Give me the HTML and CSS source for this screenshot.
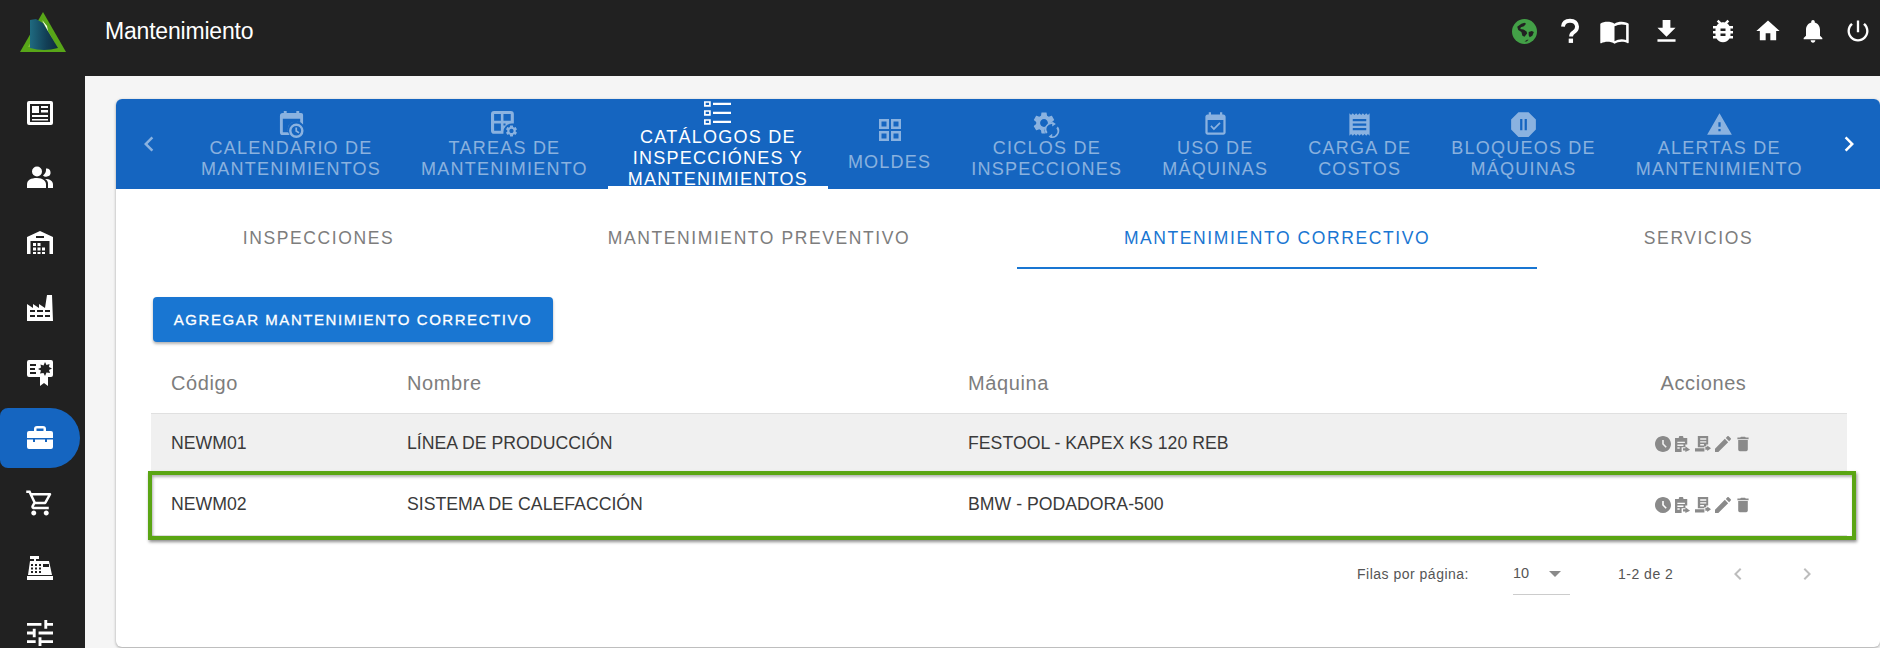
FILE: index.html
```html
<!DOCTYPE html>
<html lang="es">
<head>
<meta charset="utf-8">
<title>Mantenimiento</title>
<link rel="stylesheet" href="styles.css">
</head>
<body>
<div class="app">
  <header class="topbar">
    <div class="logo">
      <svg width="46" height="42" viewBox="0 0 46 42">
        <defs><linearGradient id="lg" x1="0" x2="1" y1="0" y2="0"><stop offset="0" stop-color="#1f6a80"/><stop offset=".6" stop-color="#123e55"/><stop offset="1" stop-color="#0d2c3d"/></linearGradient></defs>
        <path d="M23 0 46 40H0Z" fill="#58a618"/>
        <path d="M23 9 37 35H8Z" fill="#7ec03a"/>
        <path d="M10 8 16 7 23 11 38 36Q24 40 10 36Z" fill="url(#lg)"/>
        <path d="M22 8 27 14 28 19Z" fill="#fff"/>
      </svg>
    </div>
    <h1 class="title">Mantenimiento</h1>
    <nav class="tools">
      <span class="tool"><svg class="i-globe" viewBox="0 0 24 24"><circle cx="12" cy="12" r="12" fill="#43a047"/><path d="M5 7.500 9 4.500l3-1 1.500 1-2 2.500-3 1-.5 1.500 3 .5 3 2 .5 2-2.500 3-2-1-1-3.500-3-2zM16 12.500l3-1 2 1-1.500 3.500-2.500 1.500-1-2zM14.500 20h1.500l-2 1.500h-2z" fill="#212121"/></svg></span>
      <span class="tool tool-help"><svg viewBox="0 0 24 24"><path d="M5.500 8Q6 2.500 12 2.500T18.500 8Q18.500 11 15.500 13 13 14.500 13 17" fill="none" stroke="#fff" stroke-width="3.600"/><rect x="10.800" y="19" width="4" height="4" fill="#fff"/></svg></span>
      <span class="tool tool-book"><svg viewBox="0 0 24 24"><path d="M21 5c-1.110-.35-2.330-.5-3.500-.5-1.950 0-4.050.4-5.500 1.500-1.450-1.100-3.550-1.500-5.500-1.500S2.450 4.900 1 6v14.650c0 .25.25.5.5.5.1 0 .15-.05.25-.05C3.100 20.450 5.050 20 6.500 20c1.950 0 4.050.4 5.500 1.500 1.350-.85 3.800-1.500 5.500-1.500 1.650 0 3.350.3 4.750 1.050.1.05.15.05.25.05.25 0 .5-.25.5-.5V6c-.6-.45-1.250-.75-2-1zm0 13.500c-1.100-.35-2.300-.5-3.500-.5-1.700 0-4.150.65-5.500 1.500V8c1.350-.85 3.800-1.500 5.500-1.500 1.200 0 2.400.15 3.500.5v11.500z" fill="#fff"/></svg></span>
      <span class="tool tool-dl"><svg viewBox="0 0 24 24"><path d="M19 9h-4V3H9v6H5l7 7 7-7zM5 18v2h14v-2H5z" fill="#fff"/></svg></span>
      <span class="tool tool-bug"><svg viewBox="0 0 24 24"><path d="M20 8h-2.810c-.45-.78-1.070-1.450-1.820-1.960L17 4.410 15.590 3l-2.170 2.170C12.960 5.060 12.490 5 12 5c-.49 0-.96.06-1.410.17L8.410 3 7 4.410l1.620 1.630C7.880 6.550 7.260 7.220 6.810 8H4v2h2.090c-.05.33-.09.66-.09 1v1H4v2h2v1c0 .34.04.67.09 1H4v2h2.810c1.040 1.790 2.970 3 5.190 3s4.150-1.210 5.190-3H20v-2h-2.090c.05-.33.09-.66.09-1v-1h2v-2h-2v-1c0-.34-.04-.67-.09-1H20V8zm-6 8h-4v-2h4v2zm0-4h-4v-2h4v2z" fill="#fff"/></svg></span>
      <span class="tool"><svg viewBox="0 0 24 24"><path d="M10 20v-6h4v6h5v-8h3L12 3 2 12h3v8z" fill="#fff"/></svg></span>
      <span class="tool"><svg viewBox="0 0 24 24"><path d="M12 22c1.100 0 2-.9 2-2h-4c0 1.100.89 2 2 2zm6-6v-5c0-3.070-1.640-5.640-4.500-6.320V4c0-.83-.67-1.500-1.500-1.500s-1.500.67-1.500 1.500v.68C7.630 5.360 6 7.920 6 11v5l-2 2v1h16v-1l-2-2z" fill="#fff"/></svg></span>
      <span class="tool"><svg viewBox="0 0 24 24"><path d="M13 3h-2v10h2V3zm4.830 2.170l-1.420 1.420C17.990 7.860 19 9.810 19 12c0 3.870-3.130 7-7 7s-7-3.130-7-7c0-2.190 1.010-4.140 2.580-5.420L6.170 5.170C4.230 6.820 3 9.260 3 12c0 4.970 4.030 9 9 9s9-4.030 9-9c0-2.740-1.230-5.180-3.170-6.830z" fill="#fff"/></svg></span>
    </nav>
  </header>

  <aside class="sidebar">
    <a class="side-item"><svg viewBox="0 0 26 24"><path fill="#fff" fill-rule="evenodd" d="M2 0H24a2 2 0 0 1 2 2V22a2 2 0 0 1-2 2H2a2 2 0 0 1-2-2V2a2 2 0 0 1 2-2ZM3 3V21H23V3Z"/><path fill="#fff" d="M5 5h7v7H5zM14 5h7v2h-7zM14 9h7v2.500h-7zM5 14h16v2H5zM5 18h16v1.500H5z"/></svg></a>
    <a class="side-item"><svg viewBox="0 0 26 24"><path fill="#fff" d="M10 10.500a5 5 0 1 0 0-10 5 5 0 0 0 0 10ZM20 10.500a4 4 0 1 0-1-8 8 8 0 0 1-3 7 4 4 0 0 0 4 1ZM0 22v-3.500C0 14 4 12 10 12s9 3 9 6.500V22ZM21 22v-4c0-2.500-1-4-3-5 5 0 8 2 8 5.500V22Z"/></svg></a>
    <a class="side-item"><svg viewBox="0 0 26 24"><path fill="#fff" fill-rule="evenodd" d="M13 0 26 6V23H22.500V10H3.500V23H0V6ZM9 5V7H17V5Z"/><path fill="#fff" d="M6 12h3v3H6zM10.500 12h3v3h-3zM6 16.500h3v3H6zM10.500 16.500h3v3h-3zM15 16.500h3v3h-3zM6 21h3v2H6zM10.500 21h3v2h-3zM15 21h3v2h-3z"/></svg></a>
    <a class="side-item"><svg viewBox="0 0 26 26"><path fill="#fff" fill-rule="evenodd" d="M0 9 6 13V9L12 13V9L18 13 20 0H25L26 26H0ZM3 15V17H8V15ZM10 15V17H16V15ZM18 15V17H23V15ZM3 20V22H8V20ZM10 20V22H16V20ZM18 20V22H23V20Z"/></svg></a>
    <a class="side-item"><svg viewBox="0 0 26 26"><path fill="#fff" fill-rule="evenodd" d="M2 0H24a2 2 0 0 1 2 2V15a2 2 0 0 1-2 2H21V26L17 23 13 26V17H2a2 2 0 0 1-2-2V2a2 2 0 0 1 2-2ZM3 4V6H9V4ZM3 8V10H8V8ZM3 12V14H9V12Z"/><path fill="#212121" d="M18 2l1.500 3 3-1-.5 3 3 1.500-3 1.500 1 3-3.500-.5L18 16l-1.500-3-3.500.5 1-3-3-1.500 3-1.500-.5-3 3 1Z"/></svg></a>
    <a class="side-item is-active"><svg viewBox="0 0 26 24"><path fill="#fff" fill-rule="evenodd" d="M7 5V3a3 3 0 0 1 3-3h6a3 3 0 0 1 3 3V5H24a2 2 0 0 1 2 2V12H0V7a2 2 0 0 1 2-2ZM9.500 5H16.500V2.500H9.500Z"/><path fill="#fff" d="M0 13.500H6V16H8V13.500H18V16H20V13.500H26V21a2 2 0 0 1-2 2H2a2 2 0 0 1-2-2Z"/></svg></a>
    <a class="side-item"><svg class="i-cart" viewBox="0 0 24 24"><path fill="#fff" d="M15.550 13c.75 0 1.410-.41 1.750-1.030l3.580-6.490c.37-.66-.11-1.480-.87-1.480H5.210l-.94-2H1v2h2l3.600 7.590-1.350 2.440C4.520 15.370 5.480 17 7 17h12v-2H7l1.100-2h7.450zM6.160 6h12.150l-2.760 5H8.530L6.160 6zM7 18c-1.100 0-1.990.9-1.990 2S5.900 22 7 22s2-.9 2-2-.9-2-2-2zm10 0c-1.100 0-1.990.9-1.990 2s.89 2 1.990 2 2-.9 2-2-.9-2-2-2z"/></svg></a>
    <a class="side-item"><svg viewBox="0 0 26 24"><path fill="#fff" fill-rule="evenodd" d="M3 0H12V3H9V5H22L25 19H1L3 5H7V3H3ZM4 8V10H6V8ZM8 8V10H10V8ZM12 8V10H14V8ZM4 11.500V13.500H6V11.500ZM8 11.500V13.500H10V11.500ZM12 11.500V13.500H14V11.500ZM4 15V17H6V15ZM8 15V17H10V15ZM12 15V17H14V15ZM16 8V11H22V8Z"/><path fill="#fff" d="M0 20H26V24H0Z"/></svg></a>
    <a class="side-item"><svg viewBox="3 3 18 18"><path fill="#fff" d="M3 17v2h6v-2H3zM3 5v2h10V5H3zm10 16v-2h8v-2h-8v-2h-2v6h2zM7 9v2H3v2h4v2h2V9H7zm14 4v-2H11v2h10zm-6-4h2V7h4V5h-4V3h-2v6z"/></svg></a>
  </aside>

  <main class="content">
    <section class="card">
      <div class="main-tabs">
        <span class="scroll-btn scroll-prev"><svg viewBox="0 0 24 24"><path d="M15.410 7.410L14 6l-6 6 6 6 1.410-1.410L10.830 12z"/></svg></span>
        <a class="main-tab">
          <svg viewBox="0 0 26 28"><path fill-rule="evenodd" d="M5 0H8V2H18V0H21V2H23a2 2 0 0 1 2 2V14A8 8 0 0 0 11 25H4a3 3 0 0 1-3-3V5a3 3 0 0 1 3-3H5ZM4 8V22H9.500A9 9 0 0 1 22 11.500V8Z"/><path fill-rule="evenodd" d="M18 13a7.500 7.500 0 1 1 0 15 7.500 7.500 0 0 1 0-15Zm0 2.500a5 5 0 1 0 0 10 5 5 0 0 0 0-10ZM17 17h1.800v3.300l2.500 1.700-1 1.300L17 21.200Z"/></svg>
          <span>CALENDARIO DE<br>MANTENIMIENTOS</span>
        </a>
        <a class="main-tab">
          <svg viewBox="0 0 26 26"><path fill-rule="evenodd" d="M3 0H19a3 3 0 0 1 3 3V12H20A8 8 0 0 0 12 20V22H3a3 3 0 0 1-3-3V3a3 3 0 0 1 3-3ZM3 3V9.500H9.500V3ZM12 3V9.500H19V3ZM3 12V19H9.500V12ZM12 12V14H14V12Z"/><path transform="translate(13 12.500) scale(.56)" d="M19.140 12.940c.04-.3.06-.61.06-.94 0-.32-.02-.64-.07-.94l2.030-1.580c.18-.14.23-.41.12-.61l-1.920-3.320c-.12-.22-.37-.29-.59-.22l-2.390.96c-.5-.38-1.030-.7-1.620-.94l-.36-2.540c-.04-.24-.24-.41-.48-.41h-3.840c-.24 0-.43.17-.47.41l-.36 2.540c-.59.24-1.130.57-1.620.94l-2.390-.96c-.22-.08-.47 0-.59.22L2.740 8.870c-.12.21-.08.47.12.61l2.030 1.580c-.05.3-.09.63-.09.94s.02.64.07.94l-2.030 1.580c-.18.14-.23.41-.12.61l1.920 3.320c.12.22.37.29.59.22l2.390-.96c.5.38 1.030.7 1.620.94l.36 2.540c.05.24.24.41.48.41h3.840c.24 0 .44-.17.47-.41l.36-2.540c.59-.24 1.130-.56 1.620-.94l2.390.96c.22.08.47 0 .59-.22l1.920-3.320c.12-.22.07-.47-.12-.61l-2.010-1.580zM12 15.600c-1.980 0-3.600-1.620-3.600-3.600s1.620-3.600 3.600-3.600 3.600 1.620 3.600 3.600-1.620 3.600-3.600 3.600z"/></svg>
          <span>TAREAS DE<br>MANTENIMIENTO</span>
        </a>
        <a class="main-tab is-active">
          <svg viewBox="0 0 24 22"><path fill-rule="evenodd" d="M0 0H6V5H0ZM1.500 1.500V3.500H4.500V1.500ZM0 8H6V13H0ZM1.500 9.500V11.500H4.500V9.500ZM0 16H6V21H0ZM1.500 17.500V19.500H4.500V17.500Z"/><path d="M8 1.500H24V3.500H8ZM8 9.500H24V11.500H8ZM8 17.500H24V19.500H8Z"/></svg>
          <span>CATÁLOGOS DE<br>INSPECCIÓNES Y<br>MANTENIMIENTOS</span>
        </a>
        <a class="main-tab tab-plain">
          <svg viewBox="0 0 24 24"><path fill-rule="evenodd" d="M1 1H11V11H1ZM3.500 3.500V8.500H8.500V3.500ZM13 1H23V11H13ZM15.500 3.500V8.500H20.500V3.500ZM1 13H11V23H1ZM3.500 15.500V20.500H8.500V15.500ZM13 13H23V23H13ZM15.500 15.500V20.500H20.500V15.500Z"/></svg>
          <span>MOLDES</span>
        </a>
        <a class="main-tab">
          <svg viewBox="0 0 26 26"><path transform="translate(-2 -1) scale(1.050)" d="M19.140 12.940c.04-.3.06-.61.06-.94 0-.32-.02-.64-.07-.94l2.030-1.580c.18-.14.23-.41.12-.61l-1.920-3.320c-.12-.22-.37-.29-.59-.22l-2.390.96c-.5-.38-1.030-.7-1.620-.94l-.36-2.540c-.04-.24-.24-.41-.48-.41h-3.840c-.24 0-.43.17-.47.41l-.36 2.540c-.59.24-1.130.57-1.620.94l-2.390-.96c-.22-.08-.47 0-.59.22L2.740 8.870c-.12.21-.08.47.12.61l2.030 1.580c-.05.3-.09.63-.09.94s.02.64.07.94l-2.030 1.580c-.18.14-.23.41-.12.61l1.920 3.320c.12.22.37.29.59.22l2.390-.96c.5.38 1.030.7 1.620.94l.36 2.540c.05.24.24.41.48.41h3.840c.24 0 .44-.17.47-.41l.36-2.540c.59-.24 1.130-.56 1.620-.94l2.390.96c.22.08.47 0 .59-.22l1.920-3.320c.12-.22.07-.47-.12-.61l-2.010-1.580zM12 15.600c-1.980 0-3.600-1.620-3.600-3.600s1.620-3.600 3.600-3.600 3.600 1.620 3.600 3.600-1.620 3.600-3.600 3.600z"/><circle cx="18.500" cy="18.500" r="7.500" fill="#1565c0"/><path d="M18.500 12.500V15L22 12.500 18.500 10V11a7 7 0 0 0-6 11l1.500-1.500a5 5 0 0 1 4.500-8ZM24 15l-1.500 1.500a5 5 0 0 1-4 8V22L15 24.500 18.500 27V26a7 7 0 0 0 5.500-11Z"/></svg>
          <span>CICLOS DE<br>INSPECCIONES</span>
        </a>
        <a class="main-tab">
          <svg viewBox="0 0 24 24"><path d="M16.530 11.060L15.470 10l-4.880 4.880-2.120-2.120-1.060 1.060L10.590 17l5.940-5.940zM19 3h-1V1h-2v2H8V1H6v2H5c-1.110 0-1.990.9-1.990 2L3 19c0 1.100.89 2 2 2h14c1.100 0 2-.9 2-2V5c0-1.100-.9-2-2-2zm0 16H5V8h14v11z"/></svg>
          <span>USO DE<br>MÁQUINAS</span>
        </a>
        <a class="main-tab">
          <svg viewBox="0 0 24 24"><path d="M18 17H6v-2h12v2zm0-4H6v-2h12v2zm0-4H6V7h12v2zM3 22l1.500-1.500L6 22l1.500-1.500L9 22l1.500-1.500L12 22l1.500-1.500L15 22l1.500-1.500L18 22l1.500-1.500L21 22V2l-1.500 1.500L18 2l-1.500 1.500L15 2l-1.500 1.500L12 2l-1.500 1.500L9 2 7.500 3.500 6 2 4.500 3.500 3 2v20z"/></svg>
          <span>CARGA DE<br>COSTOS</span>
        </a>
        <a class="main-tab">
          <svg viewBox="0 0 24 24"><path fill-rule="evenodd" d="M7.500 1H16.500L23 7.500V16.500L16.500 23H7.500L1 16.500V7.500ZM9 7V17H11V7ZM13 7V17H15V7Z"/></svg>
          <span>BLOQUEOS DE<br>MÁQUINAS</span>
        </a>
        <a class="main-tab">
          <svg viewBox="0 0 24 24"><path d="M1 21h22L12 2 1 21zm12-3h-2v-2h2v2zm0-4h-2v-4h2v4z"/></svg>
          <span>ALERTAS DE<br>MANTENIMIENTO</span>
        </a>
        <span class="scroll-btn scroll-next"><svg viewBox="0 0 24 24"><path d="M10 6L8.590 7.410 13.170 12l-4.580 4.590L10 18l6-6z"/></svg></span>
      </div>

      <div class="sub-tabs">
        <a class="sub-tab">INSPECCIONES</a>
        <a class="sub-tab">MANTENIMIENTO PREVENTIVO</a>
        <a class="sub-tab is-active">MANTENIMIENTO CORRECTIVO</a>
        <a class="sub-tab">SERVICIOS</a>
      </div>

      <button class="add-btn">AGREGAR MANTENIMIENTO CORRECTIVO</button>

      <table class="grid">
        <thead>
          <tr><th class="c-code">Código</th><th class="c-name">Nombre</th><th class="c-machine">Máquina</th><th class="c-actions">Acciones</th></tr>
        </thead>
        <tbody>
          <tr class="is-shaded">
            <td>NEWM01</td><td>LÍNEA DE PRODUCCIÓN</td><td>FESTOOL - KAPEX KS 120 REB</td>
            <td class="c-actions"><div class="actions">
              <svg viewBox="2 2 20 20"><path d="M11.990 2C6.470 2 2 6.480 2 12s4.470 10 9.990 10C17.520 22 22 17.520 22 12S17.520 2 11.990 2zm3.300 14.710L11 12.410V7h2v4.590l3.710 3.710-1.420 1.410z"/></svg>
              <svg viewBox="0 0 17 17"><path fill-rule="evenodd" d="M0 2H4a2.500 2.500 0 0 1 5 0H13V9H11V12H7V17H0ZM2.500 6V7.500H10.500V6ZM2.500 9V10.500H9V9ZM2.500 12V13.500H5V12Z"/><path d="M8.500 13H11V11L16 14.500 11 17V15.500H8.500Z"/></svg>
              <svg viewBox="0 0 17 17"><path fill-rule="evenodd" d="M3 0H14V9H12V11H10V12H3ZM5.500 2.500V4H12V2.500ZM5.500 5.500V7H12V5.500ZM5.500 8.500V10H9.500V8.500Z"/><path d="M0 13H10V16.500H0ZM11 11.500H13V10L17 13 13 16V14.500H11Z"/></svg>
              <svg viewBox="3 3 18 18"><path d="M3 17.250V21h3.750L17.810 9.940l-3.750-3.750L3 17.250zM20.710 7.040c.39-.39.39-1.020 0-1.410l-2.340-2.340c-.39-.39-1.020-.39-1.410 0l-1.830 1.830 3.750 3.750 1.830-1.830z"/></svg>
              <svg viewBox="2 2 20 20"><path d="M6 19c0 1.100.9 2 2 2h8c1.100 0 2-.9 2-2V7H6v12zM19 4h-3.500l-1-1h-5l-1 1H5v2h14V4z"/></svg>
            </div></td>
          </tr>
          <tr>
            <td>NEWM02</td><td>SISTEMA DE CALEFACCIÓN</td><td>BMW - PODADORA-500</td>
            <td class="c-actions"><div class="actions">
              <svg viewBox="2 2 20 20"><path d="M11.990 2C6.470 2 2 6.480 2 12s4.470 10 9.990 10C17.520 22 22 17.520 22 12S17.520 2 11.990 2zm3.300 14.710L11 12.410V7h2v4.590l3.710 3.710-1.420 1.410z"/></svg>
              <svg viewBox="0 0 17 17"><path fill-rule="evenodd" d="M0 2H4a2.500 2.500 0 0 1 5 0H13V9H11V12H7V17H0ZM2.500 6V7.500H10.500V6ZM2.500 9V10.500H9V9ZM2.500 12V13.500H5V12Z"/><path d="M8.500 13H11V11L16 14.500 11 17V15.500H8.500Z"/></svg>
              <svg viewBox="0 0 17 17"><path fill-rule="evenodd" d="M3 0H14V9H12V11H10V12H3ZM5.500 2.500V4H12V2.500ZM5.500 5.500V7H12V5.500ZM5.500 8.500V10H9.500V8.500Z"/><path d="M0 13H10V16.500H0ZM11 11.500H13V10L17 13 13 16V14.500H11Z"/></svg>
              <svg viewBox="3 3 18 18"><path d="M3 17.250V21h3.750L17.810 9.940l-3.750-3.750L3 17.250zM20.710 7.040c.39-.39.39-1.020 0-1.410l-2.340-2.340c-.39-.39-1.020-.39-1.410 0l-1.830 1.830 3.750 3.750 1.830-1.830z"/></svg>
              <svg viewBox="2 2 20 20"><path d="M6 19c0 1.100.9 2 2 2h8c1.100 0 2-.9 2-2V7H6v12zM19 4h-3.500l-1-1h-5l-1 1H5v2h14V4z"/></svg>
            </div></td>
          </tr>
        </tbody>
      </table>

      <div class="highlight"></div>

      <div class="pager">
        <span class="pager-label">Filas por página:</span>
        <span class="pager-select">10<i class="caret"></i></span>
        <span class="pager-range">1-2 de 2</span>
        <span class="pager-btn"><svg viewBox="0 0 24 24"><path d="M15.410 7.410L14 6l-6 6 6 6 1.410-1.410L10.830 12z"/></svg></span>
        <span class="pager-btn"><svg viewBox="0 0 24 24"><path d="M10 6L8.590 7.410 13.170 12l-4.580 4.590L10 18l6-6z"/></svg></span>
      </div>
    </section>
  </main>
</div>
</body>
</html>
```

FILE: styles.css
```css
* { box-sizing: border-box; }
html, body { margin: 0; height: 648px; overflow: hidden; }
body { background: #212121; font-family: "Liberation Sans", Arial, sans-serif; }

.app {
  display: grid;
  grid-template-columns: 85px 1fr;
  grid-template-rows: 76px 1fr;
  height: 648px;
}

/* top bar */
.topbar {
  grid-column: 1 / -1;
  display: flex;
  align-items: center;
  padding-bottom: 14px;
  color: #fff;
}
.logo { width: 85px; padding: 4px 0 0 20px; display: flex; }
.title { margin: 0 0 0 20px; font-size: 23px; font-weight: 400; letter-spacing: -.2px; flex: 1; }
.tools { display: flex; align-items: center; }
.tool { width: 45px; height: 30px; display: flex; align-items: center; justify-content: center; }
.tool svg { width: 28px; height: 28px; flex: none; }
.tool .i-globe { width: 25px; height: 25px; }
.tool-help svg { width: 26px; height: 26px; }
.tool-book svg { width: 31px; height: 31px; }
.tool-dl { margin: 0 11px 0 7px; }
.tool-dl svg { width: 31px; height: 31px; }
.tool-bug svg { width: 30px; height: 30px; }

/* sidebar */
.sidebar {
  display: flex;
  flex-direction: column;
  gap: 5px;
  padding-top: 7px;
  padding-right: 5px;
  overflow: hidden;
  height: 572px;
}
.side-item {
  flex: 0 0 60px;
  height: 60px;
  display: flex;
  align-items: center;
  padding-left: 27px;
  border-radius: 8px 30px 30px 8px;
}
.side-item svg { width: 26px; height: 26px; }
.side-item .i-cart { width: 30px; height: 30px; margin-left: -2px; }
.side-item.is-active { background: #1565c0; }

/* content */
.content {
  background: #f5f5f5;
  padding: 23px 0 0 31px;
  height: 572px;
  overflow: hidden;
}
.card {
  position: relative;
  background: #fff;
  height: 548px;
  border-radius: 6px;
  box-shadow: 0 1px 3px rgba(0,0,0,.35);
}

/* main tabs */
.main-tabs {
  display: flex;
  align-items: stretch;
  height: 90px;
  background: #1565c0;
  border-radius: 6px 6px 0 0;
  overflow: hidden;
  color: rgba(255,255,255,.5);
}
.scroll-btn { display: flex; align-items: center; justify-content: center; }
.scroll-btn svg { width: 30px; height: 30px; fill: currentColor; }
.scroll-prev { width: 65px; }
.scroll-next { flex: 1; color: #fff; padding-right: 4px; }
.main-tab {
  position: relative;
  display: flex;
  flex-direction: column;
  align-items: center;
  justify-content: center;
  padding: 2px 20px 0;
  font-size: 18px;
  line-height: 21px;
  letter-spacing: 1.240px;
  text-align: center;
  white-space: nowrap;
}
.main-tab svg { width: 27px; height: 27px; fill: currentColor; flex: none; }
.main-tab.is-active { color: #fff; }
.main-tab.is-active::after {
  content: "";
  position: absolute;
  left: 0; right: 0; bottom: 0;
  height: 3px;
  background: #fff;
}
.main-tab.tab-plain svg { width: 24px; height: 24px; margin-bottom: 10px; }

/* sub tabs */
.sub-tabs { display: flex; height: 80px; padding: 0 20px; }
.sub-tab {
  flex: 1 1 auto;
  display: flex;
  align-items: center;
  justify-content: center;
  padding-top: 20px;
  border-bottom: 2px solid transparent;
  font-size: 17.500px;
  letter-spacing: 1.600px;
  color: #7d7d7d;
  white-space: nowrap;
}
.sub-tab.is-active { color: #1976d2; border-bottom-color: #1976d2; }

/* button */
.add-btn {
  display: block;
  margin: 28px 0 0 37px;
  width: 400px;
  height: 45px;
  border: 0;
  border-radius: 4px;
  background: #1976d2;
  color: #fff;
  font: 400 15px "Liberation Sans", Arial, sans-serif;
  letter-spacing: 1.550px;
  -webkit-text-stroke: .3px #fff;
  box-shadow: 0 2px 3px rgba(0,0,0,.3);
}

/* table */
.grid {
  margin-left: 35px;
  width: 1696px;
  table-layout: fixed;
  border-collapse: collapse;
}
.grid th {
  height: 71px;
  text-align: left;
  padding: 12px 0 0 20px;
  font-size: 20px;
  font-weight: 400;
  letter-spacing: .6px;
  color: #7d7d7d;
  border-bottom: 1px solid #e0e0e0;
}
.grid td {
  height: 61px;
  padding: 0 0 0 20px;
  font-size: 17.700px;
  color: #3a3a3a;
  border-bottom: 1px solid #e0e0e0;
}
.grid .c-code { width: 236px; }
.grid .c-name { width: 561px; }
.grid .c-machine { width: 612px; }
.grid .c-actions { padding-left: 0; text-align: center; }
.grid .is-shaded td { background: #f0f0f0; }
.actions { display: flex; justify-content: center; align-items: center; gap: 4px; padding-right: 1px; }
.actions svg { width: 16px; height: 16px; fill: #8a8a8a; }

/* annotation */
.highlight {
  position: absolute;
  left: 32px;
  top: 372px;
  width: 1708px;
  height: 69px;
  border: 4px solid #5aa513;
  box-shadow: 1px 2px 3px rgba(0,0,0,.45), inset 1px 2px 3px rgba(0,0,0,.3);
  pointer-events: none;
}

/* pager */
.pager {
  display: flex;
  align-items: center;
  height: 76px;
  margin-left: 1241px;
  font-size: 14px;
  color: #555;
}
.pager-label { width: 156px; letter-spacing: .5px; }
.pager-select {
  position: relative;
  display: flex;
  align-items: center;
  width: 57px;
  height: 42px;
  border-bottom: 1px solid #ccc;
  font-size: 14.500px;
}
.caret {
  position: absolute;
  left: 36px;
  top: 18px;
  border: 6px solid transparent;
  border-top: 6px solid #8a8a8a;
  border-bottom: 0;
}
.pager-range { margin-left: 48px; width: 85px; letter-spacing: .5px; }
.pager-btn { width: 69px; display: flex; justify-content: center; }
.pager-btn svg { width: 24px; height: 24px; fill: #bdbdbd; }
```
